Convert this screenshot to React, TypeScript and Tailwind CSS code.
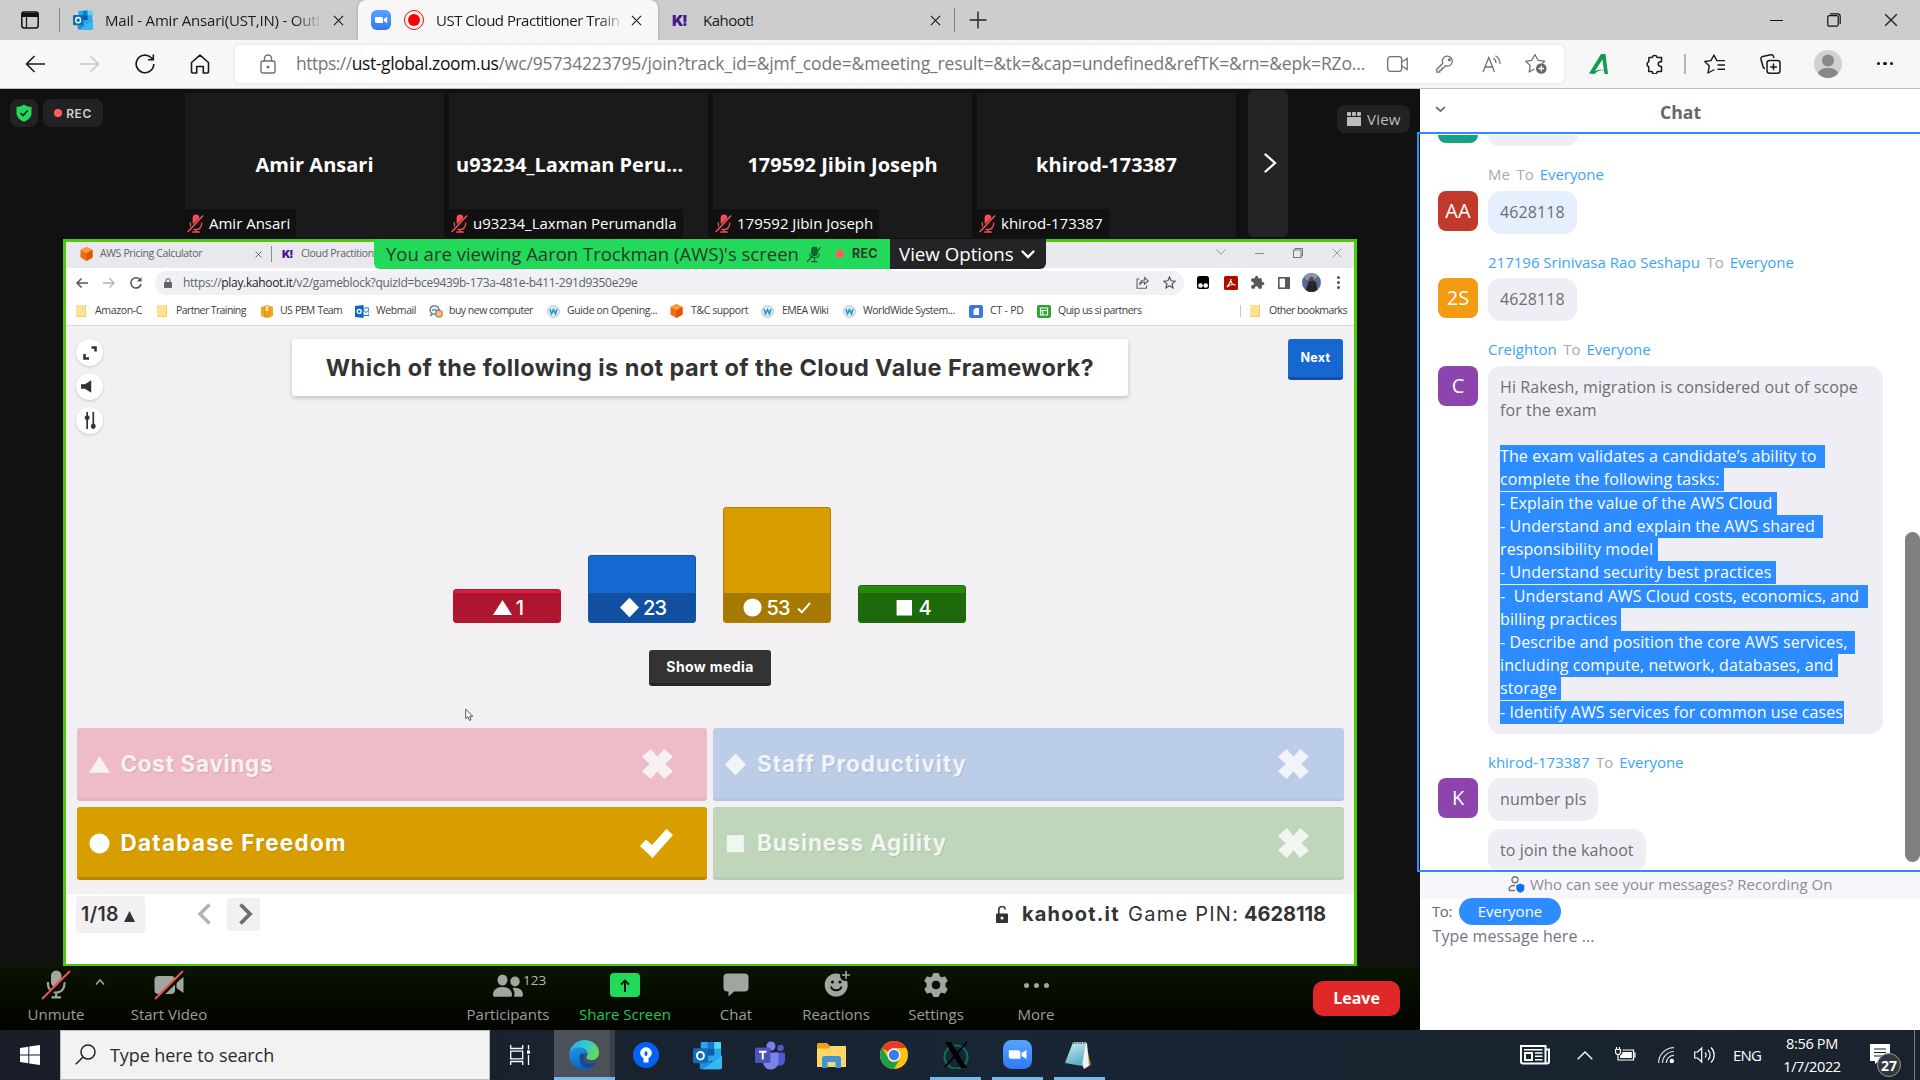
import React from 'react';

type P = { className?: string };

/* ---------- shared icons ---------- */

const Cross = ({ className = '' }: P) => (
  <svg viewBox="0 0 12 12" className={className} fill="none" stroke="currentColor" strokeWidth="1.2">
    <path d="M1 1l10 10M11 1L1 11" />
  </svg>
);

const ZoomLogo = ({ className = '' }: P) => (
  <svg viewBox="0 0 30 30" className={className}>
    <defs>
      <linearGradient id="zoomBlue" x1="0" y1="0" x2="0" y2="1">
        <stop offset="0" stopColor="#56a4ff" />
        <stop offset="1" stopColor="#3279f6" />
      </linearGradient>
    </defs>
    <rect width="30" height="30" rx="8.5" fill="url(#zoomBlue)" />
    <path d="M6 10.5h9.5a2.5 2.5 0 0 1 2.500 2.500v6.500H8.500A2.500 2.500 0 0 1 6 17z" fill="#fff" />
    <path d="M19.300 13.500l5-3.200v9.400l-5-3.200z" fill="#fff" />
  </svg>
);

const Outlook = ({ className = '' }: P) => (
  <svg viewBox="0 0 30 30" className={className}>
    <rect x="8" y="1" width="21" height="20" rx="1.500" fill="#28a8ea" />
    <path d="M8 8h7v7H8z" fill="#0364b8" />
    <path d="M15 1h7v7h-7z" fill="#0f78d4" />
    <path d="M22 1h5.500A1.500 1.500 0 0 1 29 2.500V8h-7z" fill="#50d9ff" />
    <path d="M15 8h7v7h-7z" fill="#0f5ba5" />
    <path d="M7 15l11.500 7L30 15v12.500a1.800 1.800 0 0 1-1.800 1.800H9A2 2 0 0 1 7 27.300z" fill="#1a93e0" />
    <path d="M30 15v12.500a1.800 1.800 0 0 1-1.800 1.800H10z" fill="#35b8f1" />
    <rect x="0" y="7.500" width="15.500" height="15.500" rx="1.500" fill="#0f6cbd" />
    <ellipse cx="7.700" cy="15.200" rx="3.600" ry="3.900" fill="none" stroke="#fff" strokeWidth="2" />
  </svg>
);

const MutedMic = ({ className = '' }: P) => (
  <svg viewBox="0 0 18 20" className={className}>
    <rect x="6" y="0.500" width="7" height="11.500" rx="3.500" fill="#f25056" />
    <path d="M3.500 9v1.500a6 6 0 0 0 12 0V9M9.500 16.500V19M5.500 19h8" stroke="#f25056" strokeWidth="1.500" fill="none" />
    <path d="M0.800 19.500L17.500 2.500" stroke="#111" strokeWidth="4" />
    <path d="M0.800 19L17 1.500" stroke="#f25056" strokeWidth="1.700" />
  </svg>
);

const Wiki = ({ className = '' }: P) => (
  <svg viewBox="0 0 14 14" className={className}>
    <circle cx="7" cy="7" r="6.400" fill="#dfe9ef" stroke="#a9bcc7" strokeWidth="0.800" />
    <path d="M3.200 4.300l1.700 5.200L7 4.800l2.100 4.700 1.700-5.200" stroke="#1d98cf" strokeWidth="1.600" fill="none" />
  </svg>
);

const Cube = ({ className = '' }: P) => (
  <svg viewBox="0 0 13 14" className={className}>
    <path d="M6.500 0l6 3v7.500l-6 3.500-6-3.500V3z" fill="#ef6c14" />
    <path d="M6.500 0l6 3-6 3.200-6-3.200z" fill="#fb9a3d" />
    <path d="M6.500 6.200V14l6-3.500V3z" fill="#dd5608" />
  </svg>
);

const Folder = () => <span className="h-[12px] w-[10px] shrink-0 rounded-[1px] border-r border-b border-[#f1cf6a] bg-[#fde293]" />;

const KLogo = ({ className = '' }: P) => (
  <span className={`shrink-0 font-['Inter'] leading-none font-black text-[#46178f] ${className}`}>K!</span>
);

/* ---------- outer browser ---------- */

function TabStrip() {
  return (
    <div className="flex h-10 items-stretch bg-[#cdcdcd] text-[15px] text-[#1b1b1b]">
      <div className="flex w-[60px] items-center justify-between pl-[21px]">
        <svg viewBox="0 0 18 18" className="size-[18px]" fill="none" stroke="#111" strokeWidth="1.500">
          <rect x="0.800" y="1" width="16.400" height="16" rx="2.500" />
          <path d="M1 4h16" strokeWidth="4" />
          <path d="M5.500 5v12" strokeWidth="1.200" />
        </svg>
        <span className="h-6 w-px bg-[#8a8a8a]" />
      </div>
      <div className="flex w-[298px] items-center pl-[13px]">
        <Outlook className="size-5 shrink-0" />
        <span className="ml-3 w-[215px] shrink-0 overflow-hidden tracking-[-0.2px] whitespace-nowrap [mask-image:linear-gradient(to_right,#000_88%,transparent_101%)]">
          Mail - Amir Ansari(UST,IN) - Outl
        </span>
        <Cross className="ml-[13px] size-[11px]" />
      </div>
      <div className="flex w-[300px] items-center rounded-t-lg bg-[#f7f7f7] pl-[13px] shadow-[0_0_3px_rgba(0,0,0,0.3)]">
        <ZoomLogo className="size-5 shrink-0" />
        <span className="ml-[13px] flex size-[20px] shrink-0 items-center justify-center rounded-full border-[1.5px] border-[#f00]">
          <span className="size-3 rounded-full bg-[#f00]" />
        </span>
        <span className="ml-3 w-[184px] shrink-0 overflow-hidden tracking-[-0.49px] whitespace-nowrap [mask-image:linear-gradient(to_right,#000_88%,transparent_103%)]">
          UST Cloud Practitioner Train
        </span>
        <Cross className="ml-[11px] size-[11px]" />
      </div>
      <div className="flex w-[298px] items-center pl-[14px]">
        <KLogo className="w-[16px] text-[15px] tracking-[-1.5px]" />
        <span className="ml-[15px] w-[227px] shrink-0 tracking-[-0.5px]">Kahoot!</span>
        <Cross className="size-[11px]" />
        <span className="ml-[13px] h-6 w-px bg-[#7a7a7a]" />
      </div>
      <div className="flex flex-1 items-center pl-[13px]">
        <svg viewBox="0 0 18 18" className="size-[18px]" stroke="#222" strokeWidth="1.400">
          <path d="M9 0.500v17M0.500 9h17" />
        </svg>
      </div>
      <div className="flex w-[150px] items-center text-[#222]">
        <span className="h-px w-[13px] bg-[#111]" />
        <svg viewBox="0 0 14 14" className="ml-[44px] size-[14px]" fill="none" stroke="#111" strokeWidth="1.200">
          <rect x="0.800" y="2.600" width="10.400" height="10.600" rx="1.500" />
          <path d="M3 0.800h7.500a2.700 2.700 0 0 1 2.700 2.700V11" />
        </svg>
        <Cross className="ml-[43px] size-[14px]" />
      </div>
    </div>
  );
}

function AddressRow() {
  return (
    <div className="flex h-[49px] items-center border-b border-[#bdbdbd] bg-[#f7f7f7] pb-px">
      <svg viewBox="0 0 20 18" className="ml-[25px] h-[18px] w-5" fill="none" stroke="#1a1a1a" strokeWidth="1.600">
        <path d="M20 9H1.500M9.500 1L1.500 9l8 8" />
      </svg>
      <svg viewBox="0 0 20 18" className="ml-[35px] h-[18px] w-5" fill="none" stroke="#c9c9c9" strokeWidth="1.500">
        <path d="M0 9h18.500M10.500 1l8 8-8 8" />
      </svg>
      <svg viewBox="0 0 20 20" className="ml-[35px] size-5" fill="none" stroke="#1a1a1a" strokeWidth="1.600">
        <path d="M18.800 10A8.800 8.800 0 1 1 16 3.500L18 5.500M18.300 0.500v5.200h-5.200" />
      </svg>
      <svg viewBox="0 0 20 20" className="ml-[35px] size-5" fill="none" stroke="#1a1a1a" strokeWidth="1.600" strokeLinejoin="round">
        <path d="M1.500 8.500L10 1.200l8.500 7.300V18a1 1 0 0 1-1 1h-4.200v-6.500H6.700V19H2.500a1 1 0 0 1-1-1z" />
      </svg>
      <div className="ml-[25px] flex h-[38px] w-[1329px] items-center rounded-[5px] bg-white shadow-[0_0_3px_rgba(0,0,0,0.12)]">
        <svg viewBox="0 0 16 20" className="ml-[25px] h-5 w-4" fill="none" stroke="#707070" strokeWidth="1.400">
          <rect x="1" y="7" width="14" height="12" rx="2" />
          <path d="M4.500 7V4.500a3.500 3.500 0 0 1 7 0V7" />
          <circle cx="8" cy="13" r="0.800" fill="#707070" />
        </svg>
        <span className="mb-px ml-[20px] w-[1091px] shrink-0 text-[17.5px] whitespace-nowrap text-[#767676]">
          <span className="tracking-[-0.5px]">https://</span>
          <span className="tracking-[-0.4px] text-[#111]">ust-global.zoom.us</span>
          <span className="tracking-[-0.14px]">
            /wc/95734223795/join?track_id=&amp;jmf_code=&amp;meeting_result=&amp;tk=&amp;cap=undefined&amp;refTK=&amp;rn=&amp;epk=RZo...
          </span>
        </span>
        <svg viewBox="0 0 21 16" className="h-4 w-[21px] shrink-0" fill="none" stroke="#707070" strokeWidth="1.300">
          <rect x="0.700" y="0.700" width="14" height="14.600" rx="2.500" />
          <path d="M14.700 6l5.500-3.500v11L14.700 10" />
        </svg>
        <svg viewBox="0 0 18 18" className="ml-7 size-[18px] shrink-0" fill="none" stroke="#707070" strokeWidth="1.300" strokeLinejoin="round">
          <path d="M9.300 10.700a5 5 0 1 0-2.500-2.400L0.800 14.300V17.200h3v-2h2v-2h1.600z" />
          <circle cx="13.300" cy="4.700" r="0.900" fill="#707070" />
        </svg>
        <svg viewBox="0 0 20 18" className="ml-7 h-[18px] w-5 shrink-0" fill="none" stroke="#707070" strokeWidth="1.300">
          <path d="M1 17L6.800 2.500 12.500 17M2.800 12h8M11.500 3a6 6 0 0 1 2.500 5M13.500 0.800A9.500 9.500 0 0 1 18 9" />
        </svg>
        <svg viewBox="0 0 22 21" className="ml-[23px] h-[21px] w-[22px] shrink-0" fill="none" stroke="#707070" strokeWidth="1.300" strokeLinejoin="round">
          <path d="M9.500 16l-5.300 3 1-6.400L0.800 8.200l6.100-.9L10 1.500l3 5.800 6.500.9-2 2" />
          <circle cx="16.300" cy="15.500" r="5.300" fill="#666" stroke="none" />
          <path d="M16.300 12.800v5.400M13.600 15.500H19" stroke="#fff" />
        </svg>
      </div>
      <svg viewBox="0 0 20 20" className="ml-[25px] size-5">
        <path d="M0 19.500L12 0h4.500L19 20h-3.500L13.400 5.500 6 17c3.500-1.500 6-1.500 9-1-4 0-7 1.500-9.500 4z" fill="#0f9d4f" />
      </svg>
      <svg viewBox="0 0 19 20" className="ml-9 h-5 w-[19px]" fill="none" stroke="#1a1a1a" strokeWidth="1.500" strokeLinejoin="round">
        <path d="M4 3.500h3.200a2.600 2.600 0 0 1 5 0H16.500v4.300h-1a2.300 2.300 0 0 0 0 4.600h1v5.100H12.200a2.500 2.500 0 0 1-5 0H3.700v-4.800a2.700 2.700 0 0 1 0-5z" />
      </svg>
      <span className="ml-[20px] h-5 w-[1.500px] bg-[#b5b5b5]" />
      <svg viewBox="0 0 22 20" className="ml-[18px] h-5 w-[22px]" fill="none" stroke="#1a1a1a" strokeWidth="1.400" strokeLinejoin="round">
        <path d="M10.500 15.500L4 19l1.300-7L0.800 7.500l6.100-.9L10 1l2.800 5.600H21M13.500 11H21M13.500 15.300H21" />
      </svg>
      <svg viewBox="0 0 21 20" className="ml-[34px] h-5 w-[21px]" fill="none" stroke="#1a1a1a" strokeWidth="1.500">
        <rect x="7" y="6.500" width="13" height="12.700" rx="2.500" />
        <path d="M13.500 9.500v6.700M10.200 12.900h6.700M5 14.500A2.500 2.500 0 0 1 3 12.500L1 5.500a2.500 2.500 0 0 1 1.800-3L10.500.8a2.500 2.500 0 0 1 3 1.700l.5 1.500" />
      </svg>
      <svg viewBox="0 0 28 28" className="ml-[33px] size-7">
        <circle cx="14" cy="14" r="14" fill="#d2d0ce" />
        <circle cx="14" cy="10.500" r="6" fill="#8a8886" />
        <path d="M4 23.500c1-4 5-5.500 10-5.500s9 1.500 10 5.500A14 14 0 0 1 14 28a14 14 0 0 1-10-4.500z" fill="#8a8886" />
      </svg>
      <span className="ml-[35px] flex gap-[3px]">
        {[0, 1, 2].map((i) => (
          <span key={i} className="size-[3.500px] rounded-full bg-[#111]" />
        ))}
      </span>
    </div>
  );
}

/* ---------- meeting area ---------- */

const people = [
  { title: 'Amir Ansari', label: 'Amir Ansari', w: 'w-[111px]', pad: 'justify-center' },
  { title: 'u93234_Laxman Peru...', label: 'u93234_Laxman Perumandla', w: 'w-[234px]', pad: 'pl-[7px]' },
  { title: '179592 Jibin Joseph', label: '179592 Jibin Joseph', w: 'w-[166px]', pad: 'justify-center' },
  { title: 'khirod-173387', label: 'khirod-173387', w: 'w-[132px]', pad: 'justify-center' },
];

function Gallery() {
  return (
    <div className="flex h-[150px] items-start bg-[#111]">
      <div className="flex w-[185px] gap-[5px] pt-[10px] pl-[10px]">
        <div className="flex size-7 items-center justify-center rounded-lg bg-[#222]">
          <svg viewBox="0 0 16 18" className="h-[18px] w-4">
            <path d="M8 0.500C10 2 12.500 2.800 15.500 2.800V9c0 4-3 7-7.500 8.700C3.500 16 0.500 13 0.500 9V2.800C3.500 2.800 6 2 8 0.500z" fill="#23d959" />
            <path d="M4.500 9l2.500 2.500 4.700-5" stroke="#1a1a1a" strokeWidth="1.700" fill="none" />
          </svg>
        </div>
        <div className="flex h-7 w-[60px] items-center justify-center gap-[4px] rounded-lg bg-[#222]">
          <span className="size-2 rounded-full bg-[#ff5f5f]" />
          <span className="mt-px font-['Inter'] text-[12px] font-semibold tracking-[0.5px] text-[#cfcfcf]">REC</span>
        </div>
      </div>
      <div className="flex gap-[5px] pt-1">
        {people.map((p) => (
          <div key={p.title} className={`relative flex h-[145px] w-[259px] items-center bg-[#1a1a1a] pb-[2px] ${p.pad}`}>
            <span className="text-[20px] font-bold whitespace-nowrap text-white">{p.title}</span>
            <div className={`absolute bottom-0 left-0 flex h-[29px] items-center bg-[#111] ${p.w}`}>
              <MutedMic className="ml-[2px] h-[19px] w-[17px] shrink-0" />
              <span className="ml-[5px] text-[15px] whitespace-nowrap text-white">{p.label}</span>
            </div>
          </div>
        ))}
      </div>
      <div className="mt-px ml-3 flex h-[147px] w-10 items-center justify-center rounded-md bg-[#242424]">
        <svg viewBox="0 0 13 20" className="mb-[2px] ml-1 h-5 w-[13px]" fill="none" stroke="#fff" strokeWidth="2.300" strokeLinecap="round">
          <path d="M1.500 1.500L11 10l-9.500 8.500" />
        </svg>
      </div>
      <div className="mt-4 ml-[49px] flex h-7 w-[73px] items-center rounded-lg bg-[#222] text-[#bdbdbd]">
        <svg viewBox="0 0 14 14" className="ml-[10px] size-[14px]" fill="#bdbdbd">
          <rect x="0" y="0" width="4" height="4" rx="1" />
          <rect x="5" y="0" width="4" height="4" rx="1" />
          <rect x="10" y="0" width="4" height="4" rx="1" />
          <rect x="0" y="5" width="14" height="9" rx="0.500" />
        </svg>
        <span className="ml-[6px] text-[15px] tracking-[0.2px]">View</span>
      </div>
    </div>
  );
}

function SharedTabs() {
  return (
    <div className="flex h-[26px] items-center bg-[#e8e8ed] pb-[2px] text-[10.5px] text-[#5f6368]">
      <Cube className="ml-[14px] h-[14px] w-[13px]" />
      <span className="ml-[7px] w-[155px] tracking-[-0.36px]">AWS Pricing Calculator</span>
      <Cross className="size-[7px] text-[#333]" />
      <span className="ml-[9px] h-4 w-px bg-[#8d8d90]" />
      <KLogo className="ml-[10px] w-3 text-[11px] tracking-[-1px]" />
      <span className="ml-[7px] tracking-[-0.33px]">Cloud Practition</span>
      <div className="ml-auto flex items-center pr-[12px] text-[#9a9a9e]">
        <svg viewBox="0 0 10 6" className="mb-[4px] h-[6px] w-[10px]" fill="none" stroke="currentColor"><path d="M0.500 0.500L5 5.200 9.500 0.500" /></svg>
        <span className="mb-[2px] ml-[29px] h-px w-[9px] bg-[#8a8a8e]" />
        <svg viewBox="0 0 10 10" className="mb-[3px] ml-[29px] size-[10px]" fill="none" stroke="#77777b"><rect x="0.500" y="2" width="7.500" height="7.500" /><path d="M2 2V.5h7.500V8H8" /></svg>
        <Cross className="mb-[3px] ml-[29px] size-[10px]" />
      </div>
    </div>
  );
}

function SharedAddress() {
  return (
    <div className="flex h-[29px] items-center bg-white text-[#5f6368]">
      <svg viewBox="0 0 12 10" className="ml-[10px] h-[10px] w-3" fill="none" stroke="#505357" strokeWidth="1.500"><path d="M12 5H1.200M5.500 0.500L1 5l4.500 4.500" /></svg>
      <svg viewBox="0 0 12 10" className="ml-[15px] h-[10px] w-3" fill="none" stroke="#b3b5b8" strokeWidth="1.400"><path d="M0 5h10.800M6.500 0.500L11 5 6.500 9.500" /></svg>
      <svg viewBox="0 0 12 12" className="ml-[15px] size-3" fill="none" stroke="#505357" strokeWidth="1.500"><path d="M11 7A5.100 5.100 0 1 1 9.800 2.500L11 3.800" /><path d="M11.500 0v4.500H7z" fill="#505357" stroke="none" /></svg>
      <div className="ml-[13px] flex h-6 w-[1029px] items-center rounded-full bg-[#f0f1f5]">
        <svg viewBox="0 0 8 10" className="ml-[9px] h-[10px] w-2" fill="#5f6368"><rect y="4" width="8" height="6" rx="0.800" /><path d="M2 4V2.700a2 2 0 0 1 4 0V4" fill="none" stroke="#5f6368" strokeWidth="1.100" /></svg>
        <span className="mt-px ml-[11px] text-[12px] tracking-[-0.325px] whitespace-nowrap">
          https://<span className="text-[#202124]">play.kahoot.it</span>/v2/gameblock?quizId=bce9439b-173a-481e-b411-291d9350e29e
        </span>
        <svg viewBox="0 0 13 13" className="ml-auto size-[13px]" fill="none" stroke="#5f6368" strokeWidth="1.100"><path d="M3.500 3H1v9.300h9.500V9.500M3.500 9c.5-3.500 2.500-5 5-5V1.500L12.300 5 8.500 8V6c-2.500 0-4 1-5 3z" /></svg>
        <svg viewBox="0 0 13 13" className="mr-[8px] ml-[14px] size-[13px]" fill="none" stroke="#505357" strokeWidth="1.200"><path d="M6.500 1l1.600 3.800 4.100.4-3.100 2.700.9 4-3.500-2.100L3 11.900l.9-4L.8 5.200l4.100-.4z" /></svg>
      </div>
      <svg viewBox="0 0 12 13" className="ml-[13px] h-[13px] w-3"><rect width="12" height="13" rx="2.500" fill="#000" /><circle cx="3.500" cy="9.500" r="2.300" fill="#fff" /><circle cx="8.700" cy="9.500" r="2.300" fill="#fff" /></svg>
      <svg viewBox="0 0 14 14" className="ml-[15px] size-[14px]"><rect width="14" height="14" rx="1.500" fill="#b30b00" /><path d="M3 11c1-2 4-4 4-8M7 5c.5 2.500 2 4 4.500 4C8.500 8 5 9 3 11" fill="none" stroke="#fff" strokeWidth="1.200" /></svg>
      <svg viewBox="0 0 24 24" className="ml-[12px] size-[15px]" fill="#55585c"><path d="M20.500 11H19V7a2 2 0 0 0-2-2h-4V3.500a2.500 2.500 0 0 0-5 0V5H4a2 2 0 0 0-2 2v3.800h1.500a2.700 2.700 0 0 1 0 5.400H2V20a2 2 0 0 0 2 2h3.800v-1.500a2.700 2.700 0 0 1 5.400 0V22H17a2 2 0 0 0 2-2v-4h1.500a2.500 2.500 0 0 0 0-5z" /></svg>
      <svg viewBox="0 0 12 12" className="ml-[13px] size-3"><rect x="0.800" y="0.800" width="10.400" height="10.400" fill="none" stroke="#55585c" strokeWidth="1.600" /><path d="M7 0h5v12H7z" fill="#55585c" /></svg>
      <svg viewBox="0 0 20 20" className="ml-[12px] size-[19px]"><circle cx="10" cy="10" r="10" fill="#566a92" /><path d="M2 4a10 10 0 0 1 8-4c3 0 5 1 7 3l-5 5-3-3-4 3z" fill="#8a96b0" /><path d="M4 18l3-9 4-2 4 3 1 8a10 10 0 0 1-12 0z" fill="#26262e" /><circle cx="10" cy="6.500" r="2.500" fill="#5c4a43" /></svg>
      <span className="ml-[16px] flex flex-col gap-[2.500px]">
        {[0, 1, 2].map((i) => (
          <span key={i} className="size-[2.500px] rounded-full bg-[#505357]" />
        ))}
      </span>
    </div>
  );
}

function Bookmarks() {
  return (
    <div className="flex h-[29px] items-center border-b border-[#d9d9dd] bg-white text-[10.5px] whitespace-nowrap text-[#3c4043]">
      <span className="flex w-[81px] items-center pl-[10px] tracking-[-0.35px]"><Folder /><span className="ml-[9px]">Amazon-C</span></span>
      <span className="ml-[10px] flex w-[104px] items-center tracking-[-0.6px]"><Folder /><span className="ml-[9px]">Partner Training</span></span>
      <span className="flex w-[94px] items-center tracking-[-0.7px]">
        <svg viewBox="0 0 12 13" className="h-[13px] w-3 shrink-0"><path d="M0 2l6-2 6 2v9l-6 2-6-2z" fill="#f4a61d" /><path d="M4 1v11.500M8 1v11.500" stroke="#d98708" /><path d="M4.500 1h3v5h-3z" fill="#ffe0a0" /></svg>
        <span className="ml-[7px] [word-spacing:1px]">US PEM Team</span>
      </span>
      <span className="flex w-[74px] items-center tracking-[-0.4px]">
        <svg viewBox="0 0 14 13" className="h-[13px] w-[14px] shrink-0"><path d="M7 3h7v7.500H7z" fill="#fff" stroke="#1272c9" /><path d="M8 5l3 2.500L14 5" fill="none" stroke="#1272c9" /><path d="M0 1l8.500-1v13L0 12z" fill="#0f66bd" /><circle cx="4.200" cy="6.500" r="2" fill="none" stroke="#fff" strokeWidth="1.300" /></svg>
        <span className="ml-[7px]">Webmail</span>
      </span>
      <span className="flex w-[118px] items-center tracking-[-0.5px]">
        <svg viewBox="0 0 14 13" className="h-[13px] w-[14px] shrink-0"><ellipse cx="5.500" cy="5" rx="4.500" ry="4.300" fill="#e8eef4" stroke="#4a5560" strokeWidth="1.100" /><path d="M3 5h5" stroke="#3d8ad6" strokeWidth="1.300" /><rect x="7" y="5.500" width="6" height="6.500" rx="1.500" fill="#f6c27a" stroke="#8a6a3c" /><path d="M2 9l-1.500 2.500L4 10" fill="#4a5560" /></svg>
        <span className="ml-[6px]">buy new computer</span>
      </span>
      <span className="flex w-[123px] items-center tracking-[-0.37px]"><Wiki className="size-[13px] shrink-0" /><span className="ml-[7px]">Guide on Opening...</span></span>
      <span className="flex w-[91px] items-center tracking-[-0.4px]"><Cube className="h-[14px] w-[13px] shrink-0" /><span className="ml-[8px]">T&amp;C support</span></span>
      <span className="flex w-[82px] items-center tracking-[-0.5px]"><Wiki className="size-[13px] shrink-0" /><span className="ml-[8px]">EMEA Wiki</span></span>
      <span className="flex w-[126px] items-center tracking-[-0.46px]"><Wiki className="size-[13px] shrink-0" /><span className="ml-[7px]">WorldWide System...</span></span>
      <span className="flex w-[68px] items-center tracking-[-0.2px]">
        <svg viewBox="0 0 14 13" className="h-[13px] w-[14px] shrink-0"><rect width="14" height="13" rx="2" fill="#3a77e8" /><path d="M6.500 3H10v7H4.500V5z" fill="#fff" /></svg>
        <span className="ml-[7px]">CT - PD</span>
      </span>
      <span className="flex items-center tracking-[-0.5px]">
        <svg viewBox="0 0 14 13" className="h-[13px] w-[14px] shrink-0"><rect width="14" height="13" rx="2" fill="#2ba52e" /><path d="M3.500 3h7v7h-7zM3.500 5.500h7M5.700 5.500V10" fill="none" stroke="#fff" strokeWidth="1.200" /></svg>
        <span className="ml-[7px]">Quip us si partners</span>
      </span>
      <span className="mr-[7px] ml-auto flex items-center tracking-[-0.55px]">
        <span className="mr-[9px] h-3 w-px bg-[#c8c8cc]" /><Folder /><span className="ml-[9px]">Other bookmarks</span>
      </span>
    </div>
  );
}

const RoundButton = ({ children }: { children: React.ReactNode }) => (
  <div className="flex size-[27px] items-center justify-center rounded-full bg-white shadow-[0_1px_3px_rgba(0,0,0,0.18)]">{children}</div>
);

const bars = [
  { n: '1', h: 'h-[34px]', c: 'bg-[#d61f3f] border-[#bb1237]', f: 'bg-[#ae152e]', shape: 'tri' },
  { n: '23', h: 'h-[68px]', c: 'bg-[#1568cf] border-[#1256ab]', f: 'bg-[#1150a0]', shape: 'dia' },
  { n: '53', h: 'h-[116px]', c: 'bg-[#d89e00] border-[#b27f04]', f: 'bg-[#a67a02]', shape: 'cir' },
  { n: '4', h: 'h-[38px]', c: 'bg-[#26890c] border-[#1c6a09]', f: 'bg-[#1e690b]', shape: 'sq' },
];

const Shape = ({ kind, className }: { kind: string; className: string }) => (
  <svg viewBox="0 0 24 24" className={className} fill="currentColor">
    {kind === 'tri' && <path d="M12 2.500L24 21.500H0z" />}
    {kind === 'dia' && <path d="M12 -0.500L24 12 12 24.500 0 12z" />}
    {kind === 'cir' && <circle cx="12" cy="12" r="11.500" />}
    {kind === 'sq' && <path d="M2 2.500h19.500v19.500H2z" />}
  </svg>
);

const BigX = ({ className = '' }: P) => (
  <svg viewBox="0 0 32 31" className={className} fill="currentColor">
    <path d="M9 0L16 8l7-8 9 8-8 7.500 8 7.500-9 8-7-8-7 8-9-8 8-7.500L0 8z" />
  </svg>
);

const answers = [
  { t: 'Cost Savings', s: 'tri', c: 'bg-[#edbcc6] border-[#e5b3be] text-[#f8f1f4]', k: 'tracking-[0.7px]', ok: false },
  { t: 'Staff Productivity', s: 'dia', c: 'bg-[#bccde7] border-[#b3c5e1] text-[#f1f4fa]', k: 'tracking-[0.93px]', ok: false },
  { t: 'Database Freedom', s: 'cir', c: 'bg-[#d89e00] border-[#b58404] text-white', k: 'tracking-[1.25px]', ok: true },
  { t: 'Business Agility', s: 'sq', c: 'bg-[#c0d6bb] border-[#b8cbb6] text-[#f2f6f2]', k: 'tracking-[0.83px]', ok: false },
];

function Kahoot() {
  return (
    <div className="flex flex-1 flex-col bg-white font-['Inter']">
      <div className="flex h-[568px] flex-col bg-[#f2f0f3]">
        <div className="flex h-[181px] items-start">
          <div className="ml-[10px] flex w-[216px] flex-col gap-[7px] pt-[13px]">
            <RoundButton>
              <svg viewBox="0 0 14 14" className="size-[14px]" fill="none" stroke="#333" strokeWidth="2.600"><path d="M8.500 1.500h4v4M1.500 8v4.500H6" /></svg>
            </RoundButton>
            <RoundButton>
              <svg viewBox="0 0 14 16" className="mr-[7px] h-[15px] w-[11px]" fill="#333"><path d="M0 5h5l8-5v16l-8-5H0z" /></svg>
            </RoundButton>
            <RoundButton>
              <svg viewBox="0 0 12 18" className="h-[17px] w-3" fill="#333" stroke="#333" strokeWidth="1.800"><path d="M3 0v18M9.500 0v18" /><circle cx="3" cy="6" r="1.700" /><circle cx="9.500" cy="15" r="1.700" /></svg>
            </RoundButton>
          </div>
          <div className="mt-[13px] flex h-[57px] w-[836px] items-center justify-center rounded-[3px] bg-white shadow-[0_2px_4px_rgba(0,0,0,0.2)]">
            <span className="mt-px text-[23.500px] font-bold tracking-[0.41px] whitespace-nowrap text-[#333]">
              Which of the following is not part of the Cloud Value Framework?
            </span>
          </div>
          <div className="mt-[13px] ml-40 flex h-[41px] w-[55px] justify-center rounded-[3px] border-b-[3px] border-[#1052a8] bg-[#1568cf] pt-[10px] text-[12.500px] font-bold tracking-[0.3px] text-white">
            Next
          </div>
        </div>
        <div className="flex h-[116px] items-end justify-center gap-[27px] pr-px">
          {bars.map((b) => (
            <div key={b.n} className={`flex w-[108px] flex-col justify-end overflow-hidden rounded-[3px] border ${b.h} ${b.c}`}>
              <div className={`flex h-[29px] shrink-0 items-center justify-center gap-[4px] pl-[2px] text-[20px] font-medium tracking-[-0.9px] text-white ${b.f}`}>
                <Shape kind={b.shape} className="size-[19px]" />
                <span>{b.n}</span>
                {b.shape === 'cir' && (
                  <svg viewBox="0 0 14 12" className="mr-[2px] ml-[3px] h-3 w-[14px]" fill="none" stroke="#fff" strokeWidth="1.900"><path d="M1 6.500L4.800 10.300 13 1" /></svg>
                )}
              </div>
            </div>
          ))}
        </div>
        <div className="mt-[27px] ml-[583px] flex h-9 w-[122px] justify-center rounded-[3px] border-b-[3px] border-[#262626] bg-[#333] pt-[6px] text-[14px] font-bold tracking-[0.4px] text-white">
          Show media
        </div>
        <div className="ml-[399px] h-[42px] pt-[22px]">
          <svg viewBox="0 0 10 15" className="h-[14px] w-[9px]" fill="#fff" stroke="#4a3f3f" strokeWidth="1"><path d="M0.800 1v10.500l2.500-2 1.700 4 1.700-.7L5.200 9h3.500z" /></svg>
        </div>
        <div className="grid grid-cols-[630.5px_630.5px] gap-x-[6px] gap-y-[6px] pl-[10.5px]">
          {answers.map((a) => (
            <div key={a.t} className={`flex h-[73px] items-center rounded-[3px] border-b-[3px] pt-[2px] pl-3 ${a.c}`}>
              <Shape kind={a.s} className="size-[21px]" />
              <span className={`ml-[11px] text-[22.500px] font-bold [text-shadow:1px_1px_1px_rgba(0,0,0,0.12)] ${a.k}`}>{a.t}</span>
              {a.ok ? (
                <svg viewBox="0 0 33 29" className="mr-[34px] ml-auto h-[29px] w-[33px]" fill="currentColor"><path d="M0 17l6-6.500 6 5.500L26.500 0 33 6 12.500 29z" /></svg>
              ) : (
                <BigX className="mr-[34.5px] ml-auto h-[30px] w-[31px]" />
              )}
            </div>
          ))}
        </div>
      </div>
      <div className="flex h-[40px] items-center text-[#333]">
        <div className="mt-px ml-[10px] flex h-[37px] w-[69px] items-center rounded-[3px] bg-[#f2f0f3] pl-[5px] text-[19.500px] font-semibold tracking-[0.4px]">
          1/18
          <svg viewBox="0 0 11 11" className="mt-[3px] ml-[5px] size-[11px]" fill="#333"><path d="M5.500 0L11 11H0z" /></svg>
        </div>
        <svg viewBox="0 0 14 22" className="ml-[52px] h-[22px] w-[14px]" fill="none" stroke="#b2b2b2" strokeWidth="3.400"><path d="M12.500 1.500L3 11l9.500 9.500" /></svg>
        <div className="ml-4 flex h-[33px] w-[33px] items-center justify-center rounded-[3px] bg-[#f2f0f3]">
          <svg viewBox="0 0 14 22" className="ml-1 h-[22px] w-[14px]" fill="none" stroke="#6e6e6e" strokeWidth="3.800"><path d="M1.500 1.500L11 11l-9.500 9.500" /></svg>
        </div>
        <div className="mr-[28px] ml-auto flex items-center text-[20px]">
          <svg viewBox="0 0 12 17" className="h-[17px] w-3" fill="#333"><path fillRule="evenodd" d="M0 8.500a1 1 0 0 1 1-1h10a1 1 0 0 1 1 1V16a1 1 0 0 1-1 1H1a1 1 0 0 1-1-1zM6 10.500a1.500 1.500 0 1 0 0 3 1.500 1.500 0 0 0 0-3z" /><path d="M2.800 8V4a3.200 3.200 0 0 1 6.400-.5" fill="none" stroke="#333" strokeWidth="1.600" /></svg>
          <span className="ml-[14px] w-[106px] font-bold tracking-[1.200px]">kahoot.it</span>
          <span className="w-[116px] tracking-[1.250px]">Game PIN:</span>
          <span className="w-[82px] font-bold tracking-[-0.050px]">4628118</span>
        </div>
      </div>
    </div>
  );
}

function ShareFrame() {
  return (
    <div className="relative ml-[63px] flex h-[727px] w-[1294px] flex-col border-[3px] border-b-2 border-[#4ec80a] bg-white">
      <SharedTabs />
      <SharedAddress />
      <Bookmarks />
      <Kahoot />
      <div className="absolute -top-[3px] left-[308px] flex h-[30px] whitespace-nowrap">
        <div className="flex w-[516px] items-center rounded-bl-md bg-[#23d959] pl-[12px] text-[#2a3a2e]">
          <span className="w-[420px] text-[18.500px]">You are viewing Aaron Trockman (AWS)'s screen</span>
          <svg viewBox="0 0 16 18" className="h-[17px] w-4" fill="none" stroke="#17602f">
            <rect x="5.500" y="1" width="6" height="9.500" rx="3" fill="#17602f" />
            <path d="M3.500 8c0 6 10 6 10 0M8.500 13v3.500M5 16.500h7" strokeWidth="1.200" />
            <path d="M0.500 17L15 1.500" strokeWidth="1.400" />
          </svg>
          <span className="ml-[14px] size-2 rounded-full bg-[#ff5a5f]" />
          <span className="mt-px ml-2 font-['Inter'] text-[12.500px] font-bold tracking-[0.200px]">REC</span>
        </div>
        <div className="flex w-[156px] items-center rounded-br-md bg-[#242427] pl-[9px] text-[18.700px] text-white">
          View Options
          <svg viewBox="0 0 14 9" className="ml-[7px] h-[9px] w-[14px]" fill="none" stroke="#fff" strokeWidth="2.300" strokeLinecap="round"><path d="M1.500 1.500L7 7l5.500-5.500" /></svg>
        </div>
      </div>
    </div>
  );
}

function Tool({ label, width, green, children }: { label: string; width: string; green?: boolean; children: React.ReactNode }) {
  return (
    <div className={`flex flex-col items-center ${width}`}>
      <div className="flex h-[38px] items-center justify-center">{children}</div>
      <span className={`text-[15px] leading-5 whitespace-nowrap ${green ? 'text-[#23c552]' : 'text-[#9b9d98]'}`}>{label}</span>
    </div>
  );
}

function MeetingToolbar() {
  return (
    <div className="flex h-16 items-start bg-linear-to-b from-[#0a1500] to-[#020400]">
      <div className="relative ml-[6px]">
        <Tool label="Unmute" width="w-[100px]">
          <svg viewBox="0 0 30 30" className="h-[30px] w-[30px]">
            <rect x="10" y="0.500" width="10.500" height="17" rx="5.200" fill="#a3a5a0" />
            <path d="M7 12v2.500a8.200 8.200 0 0 0 16.400 0V12M15.200 23v4M10.500 27.300h9.500" stroke="#a3a5a0" strokeWidth="2.200" fill="none" />
            <path d="M2 29.500L31 1.500" stroke="#071000" strokeWidth="4.500" />
            <path d="M1 29L29 1" stroke="#f2554f" strokeWidth="2" />
          </svg>
        </Tool>
        <svg viewBox="0 0 10 6" className="absolute top-[13px] left-[89px] h-[6px] w-[10px]" fill="none" stroke="#a3a5a0" strokeWidth="1.600"><path d="M1 5.500L5 1l4 4.500" /></svg>
      </div>
      <Tool label="Start Video" width="ml-[13px] w-[100px]">
        <svg viewBox="0 0 30 30" className="h-[30px] w-[30px]">
          <rect x="0.500" y="6" width="20.500" height="18" rx="4" fill="#a3a5a0" />
          <path d="M22.500 12l7-5v16l-7-5z" fill="#a3a5a0" />
          <path d="M2 30L31 1.500" stroke="#071000" strokeWidth="4.500" />
          <path d="M1 29L29 1" stroke="#f2554f" strokeWidth="2" />
        </svg>
      </Tool>
      <div className="relative ml-[239px]">
        <Tool label="Participants" width="w-[100px]">
          <svg viewBox="0 0 30 23" className="h-[23px] w-[30px]" fill="#a3a5a0">
            <ellipse cx="9.500" cy="6" rx="5" ry="5.500" />
            <path d="M0 21c0-5 3.500-8 9.500-8s9.500 3 9.500 8c0 1-.5 1.800-2 1.800H2c-1.500 0-2-.8-2-1.800z" />
            <ellipse cx="22" cy="7.500" rx="4.700" ry="5" />
            <path d="M19.500 14c7-1 10.500 2.500 10.500 7 0 1-.5 1.800-2 1.800h-7c1-2.500.5-6-1.500-8.800z" />
          </svg>
        </Tool>
        <span className="absolute top-[4px] left-[65px] text-[13.500px] leading-5 text-[#b9bbb6]">123</span>
      </div>
      <Tool label="Share Screen" green width="ml-[13px] w-[108px]">
        <span className="flex h-6 w-[30px] items-center justify-center rounded-[4px] bg-[#23d959]">
          <svg viewBox="0 0 10 13" className="h-[13px] w-[10px]" fill="none" stroke="#0a1500" strokeWidth="1.900"><path d="M5 13V1.500M1 5.500l4-4 4 4" /></svg>
        </span>
      </Tool>
      <Tool label="Chat" width="ml-[7px] w-[100px]">
        <svg viewBox="0 0 26 24" className="h-6 w-[26px]" fill="#a3a5a0"><path d="M4.500 0.500h17a4 4 0 0 1 4 4v10a4 4 0 0 1-4 4H11L5.500 23.500v-5h-1a4 4 0 0 1-4-4v-10a4 4 0 0 1 4-4z" /></svg>
      </Tool>
      <Tool label="Reactions" width="w-[100px]">
        <svg viewBox="0 0 27 27" className="mb-[3px] ml-[2px] h-[27px] w-[27px]">
          <circle cx="12.200" cy="15" r="11.500" fill="#a3a5a0" />
          <circle cx="21.500" cy="5.500" r="5.500" fill="#081200" />
          <circle cx="8.500" cy="12" r="1.600" fill="#0a1500" />
          <circle cx="16" cy="12" r="1.600" fill="#0a1500" />
          <path d="M7 16.500c1 5 9.500 5 10.500 0" stroke="#0a1500" strokeWidth="1.800" fill="none" />
          <path d="M22 1v8M18 5h8" stroke="#a3a5a0" strokeWidth="1.600" />
        </svg>
      </Tool>
      <Tool label="Settings" width="w-[100px]">
        <svg viewBox="0 0 24 24" className="h-6 w-6" fill="#a3a5a0" stroke="#a3a5a0" strokeLinejoin="round">
          <path fillRule="evenodd" d="M9.500 0.500h5l1 3 2 1.200L21 3.900l2.200 4L21 10.500v3l2.200 2.600-2.200 4-3.500-.8-2 1.200-1 3h-5l-1-3-2-1.200-3.500.8-2.200-4L3 13.500v-3L.8 7.900l2.200-4 3.500.8 2-1.200zM12 7.200a4.800 4.800 0 1 0 0 9.600 4.800 4.800 0 0 0 0-9.600z" />
        </svg>
      </Tool>
      <Tool label="More" width="w-[100px]">
        <span className="flex gap-[5px]">
          {[0, 1, 2].map((i) => (
            <span key={i} className="size-[5px] rounded-full bg-[#a3a5a0]" />
          ))}
        </span>
      </Tool>
      <div className="mt-[15px] ml-[227px] flex h-[35px] w-[87px] items-center justify-center rounded-[10px] bg-[#e02828] pb-px text-[16px] font-bold text-white">Leave</div>
    </div>
  );
}

/* ---------- chat ---------- */

const Head = ({ from, me, className }: { from: string; me?: boolean; className: string }) => (
  <div className={`ml-[68px] text-[15px] leading-[20px] whitespace-nowrap ${className}`}>
    <span className={me ? 'text-[#a9a9ad]' : 'text-[#3aa5f8]'}>{from}</span>
    <span className="mr-[6px] ml-[6.5px] text-[#a9a9ad]">To</span>
    <span className="tracking-[-0.05px] text-[#3aa5f8]">Everyone</span>
  </div>
);

const Avatar = ({ t, c }: { t: string; c: string }) => (
  <div className={`flex size-10 shrink-0 items-center justify-center rounded-[8px] text-[20px] text-white ${c}`}>{t}</div>
);

const Bubble = ({ children, c = 'bg-[#efeef4]' }: { children: React.ReactNode; c?: string }) => (
  <div className={`h-[43px] rounded-[13px] px-3 pt-[9.500px] text-[16px] leading-[23px] tracking-[0.1px] whitespace-nowrap text-[#6e6e73] ${c}`}>{children}</div>
);

const selected = [
  { t: 'The exam validates a candidate’s ability to', w: 'w-[325px]' },
  { t: 'complete the following tasks:', w: 'w-[224px]' },
  { t: '- Explain the value of the AWS Cloud', w: 'w-[277px]', gap: true },
  { t: '- Understand and explain the AWS shared', w: 'w-[323px]' },
  { t: 'responsibility model', w: 'w-[158px]' },
  { t: '- Understand security best practices', w: 'w-[276px]' },
  { t: '-\u00a0 Understand AWS Cloud costs, economics, and', w: 'w-[368px]', gap: true },
  { t: 'billing practices', w: 'w-[121px]' },
  { t: '- Describe and position the core AWS services,', w: 'w-[355px]' },
  { t: 'including compute, network, databases, and', w: 'w-[338px]' },
  { t: 'storage', w: 'w-[61px]' },
  { t: '- Identify AWS services for common use cases', w: 'w-[344px]', gap: true },
];

function Chat() {
  return (
    <div className="flex h-[941px] w-[500px] flex-col bg-white">
      <div className="flex h-[43px] items-center">
        <svg viewBox="0 0 12 8" className="mb-[2px] ml-[15px] h-[7px] w-[11px]" fill="none" stroke="#666" strokeWidth="2"><path d="M1 1.200l5 4.600 5-4.600" /></svg>
        <span className="mt-[3px] ml-[214px] text-[17.600px] font-bold text-[#666]">Chat</span>
      </div>
      <div className="-ml-[3px] flex h-[740px] w-[503px] border-y-2 border-l-2 border-[#2d8cff] bg-white">
        <div className="w-px bg-[#111]" />
        <div className="flex h-[735px] w-[485px] flex-col overflow-hidden">
          <div className="mt-px ml-[18px] flex gap-[10px]">
            <div className="h-[8px] w-10 rounded-b-[8px] bg-[#16a085]" />
            <div className="h-[11px] w-[90px] rounded-b-[13px] bg-[#efeef4]" />
          </div>
          <Head from="Me" me className="mt-[18px]" />
          <div className="mt-[7px] ml-[18px] flex gap-[10px]">
            <Avatar t="AA" c="bg-[#c0392b]" />
            <Bubble c="bg-[#e5effd]">4628118</Bubble>
          </div>
          <Head from="217196 Srinivasa Rao Seshapu" className="mt-[18px]" />
          <div className="mt-[6px] ml-[18px] flex gap-[10px]">
            <Avatar t="2S" c="bg-[#f39c12]" />
            <Bubble>4628118</Bubble>
          </div>
          <Head from="Creighton" className="mt-[18px]" />
          <div className="mt-[7px] ml-[18px] flex gap-[10px]">
            <Avatar t="C" c="bg-[#8e44ad]" />
            <div className="h-[368px] w-[395px] rounded-[13px] bg-[#efeef4] px-3 pt-[10px] text-[16px] leading-[23px] tracking-[0.1px] whitespace-nowrap text-[#6e6e73]">
              <div>Hi Rakesh, migration is considered out of scope</div>
              <div className="mb-[23px]">for the exam</div>
              {selected.map((l) => (
                <div key={l.t} className={`h-[23px] bg-[#2d8cff] leading-[22px] text-white ${l.w} ${l.gap ? 'mt-px' : ''}`}>{l.t}</div>
              ))}
            </div>
          </div>
          <Head from="khirod-173387" className="mt-[18px]" />
          <div className="mt-[6px] ml-[18px] flex gap-[10px]">
            <Avatar t="K" c="bg-[#8e44ad]" />
            <Bubble>number pls</Bubble>
          </div>
          <div className="mt-2 ml-[68px] flex">
            <Bubble>to join the kahoot</Bubble>
          </div>
        </div>
        <div className="mt-[398px] h-[330px] w-[15px] rounded-full bg-[#808080]" />
      </div>
      <div className="flex h-[27px] items-center bg-[#f7f7fb]">
        <svg viewBox="0 0 17 17" className="mb-[3px] ml-[88px] h-[17px] w-[17px]" fill="none" stroke="#777" strokeWidth="1.400">
          <circle cx="7" cy="3.700" r="3" />
          <path d="M7 14.500H1.500c-1.500-3 1.500-5.500 5.500-5" />
          <path d="M12.300 7.500l4 1.800v3.500c0 2-2 3.500-4 4-2-.5-4-2-4-4V9.300z" fill="#0e71eb" stroke="none" />
        </svg>
        <span className="mb-[2px] ml-[5px] text-[15px] whitespace-nowrap text-[#8b8b95]">Who can see your messages? Recording On</span>
      </div>
      <div className="flex h-[26px] items-center pl-[12px] text-[15px]">
        <span className="mb-px w-[27px] tracking-[-0.4px] text-[#666]">To:</span>
        <span className="-mt-px flex h-[27px] w-[102px] items-center justify-center rounded-full bg-[#2d8cff] text-white">Everyone</span>
      </div>
      <div className="pl-[12.500px] text-[16px] leading-[22px] tracking-[0.070px] text-[#747487]">Type message here ...</div>
    </div>
  );
}

/* ---------- taskbar ---------- */

function Taskbar() {
  return (
    <div className="flex h-[50px] items-center bg-linear-to-r from-[#1a1d27] via-[#182534] to-[#1a222d] text-white">
      <svg viewBox="0 0 20 20" className="ml-5 size-5" fill="#fff"><path d="M0 3l8.300-1.200v7.700H0zM9.300 1.600L20 0v9.500H9.300zM0 10.500h8.300v7.700L0 17zM9.300 10.500H20V20L9.300 18.400z" /></svg>
      <div className="ml-5 flex h-[50px] w-[430px] items-center border border-[#bcbcbc] bg-[#f2f2f2] text-[#2b2b2b]">
        <svg viewBox="0 0 21 21" className="mb-px ml-[14px] size-[21px]" fill="none" stroke="#222" strokeWidth="1.500"><circle cx="13" cy="8" r="7" /><path d="M8 13L0.800 20.200" /></svg>
        <span className="ml-[14px] text-[18px] tracking-[-0.08px]">Type here to search</span>
      </div>
      <svg viewBox="0 0 21 20" className="ml-5 h-5 w-[21px]" fill="none" stroke="#fff" strokeWidth="1.300"><path d="M0.700 0v3.500h12V0M0.700 20v-3.500h12V20M0.700 6.200h12v7.600h-12zM18.500 0v4.500M18.500 10v10" /><path d="M17 5.500h3v3.200h-3z" fill="#fff" stroke="none" /></svg>
      <div className="ml-[23px] flex h-[50px] w-[61px] justify-between border-b-[3px] border-[#76b9ed] bg-[#3b4048]">
        <div className="flex w-14 items-center justify-center bg-[#4b5159]">
          <svg viewBox="0 0 30 30" className="mt-[3px] ml-[4px] size-[30px]">
            <defs>
              <linearGradient id="edgeTop" x1="0" y1="0" x2="1" y2="0.300"><stop offset="0" stopColor="#2fa8e8" /><stop offset="0.550" stopColor="#35c6d8" /><stop offset="1" stopColor="#62dc5e" /></linearGradient>
              <linearGradient id="edgeLow" x1="0" y1="0" x2="0.500" y2="1"><stop offset="0" stopColor="#1b9de2" /><stop offset="1" stopColor="#0c5fb5" /></linearGradient>
            </defs>
            <path d="M0.500 12C2 5 8 0 15.500 0 24 0 30 6 30 12.500c0 5-3.500 7.500-7.500 7.500-3 0-5-1-5-2.500 0-1 1-1.500 1-3.500 0-3-3-5-7-5-5 0-9 1-11 3z" fill="url(#edgeTop)" />
            <path d="M0.300 12C2 9.500 6 7.500 10.500 7.500c5 0 8 2.500 8 6-6-2-9 6-4 10.500 4 3 9 1.500 12.500-1C24.500 27.500 20 30 15 30 6.500 30-1 23 0.300 12z" fill="url(#edgeLow)" />
            <path d="M11 15c-1.500 6 1.500 12 8 13 4-1 7-3 8.500-6-4 2.500-9 2.500-12-1-1.500-2-1.500-5 0-7-2-.5-4-.5-4.500 1z" fill="#15489c" />
          </svg>
        </div>
      </div>
      <svg viewBox="0 0 26 26" className="ml-[18px] size-[26px]"><circle cx="13" cy="13" r="13" fill="#0560f5" /><circle cx="13" cy="11" r="5.800" fill="#fff" /><path d="M10.500 14h5v6.500h-5z" fill="#fff" /><ellipse cx="13" cy="11.500" rx="1.500" ry="2.500" fill="#0560f5" /></svg>
      <Outlook className="ml-[34px] size-[29px]" />
      <svg viewBox="0 0 30 28" className="ml-[33px] h-[29px] w-[30px]">
        <circle cx="16" cy="4.500" r="4.500" fill="#7b83eb" /><circle cx="25.500" cy="6.500" r="3.300" fill="#5059c9" />
        <path d="M19 11h10a1 1 0 0 1 1 1v7.500a5.500 5.500 0 0 1-9 3.500z" fill="#5059c9" />
        <path d="M8 11h14.500a1 1 0 0 1 1 1v8.500A7.500 7.500 0 0 1 16 28a7.500 7.500 0 0 1-8-7z" fill="#7b83eb" />
        <rect y="6" width="15.500" height="15.500" rx="1.500" fill="#4b53bc" /><path d="M4 10.200h7.500M7.750 10v8" stroke="#fff" strokeWidth="2" />
      </svg>
      <svg viewBox="0 0 29 25" className="ml-8 h-[25px] w-[29px]">
        <path d="M0 1.500A1.500 1.500 0 0 1 1.500 0H10l3 3H27.500A1.500 1.500 0 0 1 29 4.500V8H0z" fill="#e8a614" />
        <path d="M0 5.500h11.500l2.500-2.500H29V24H0z" fill="#ffd566" />
        <path d="M5 25v-9.500a2.500 2.500 0 0 1 2.500-2.500h14a2.500 2.500 0 0 1 2.500 2.500V25h-5.500v-6h-8v6z" fill="#3f93d8" />
      </svg>
      <svg viewBox="0 0 28 28" className="ml-[34px] size-7">
        <circle cx="14" cy="14" r="14" fill="#fbc116" />
        <path d="M1.900 7A14 14 0 0 1 26.100 7H14a7 7 0 0 0-6.100 3.500z" fill="#e33b2e" />
        <path d="M1.900 7A14 14 0 0 0 14 28l6.100-10.500A7 7 0 0 1 7.900 17.500z" fill="#1ea04b" />
        <path d="M1.900 7l6 10.500" stroke="#1ea04b" />
        <circle cx="14" cy="14" r="6.500" fill="#fff" /><circle cx="14" cy="14" r="5.200" fill="#3a7df0" />
      </svg>
      <div className="ml-[22px] flex h-[50px] w-[51px] items-center justify-center border-b-[3px] border-[#76b9ed]">
        <svg viewBox="0 0 32 28" className="mt-[3px] h-7 w-8"><circle cx="16" cy="16" r="11.500" fill="none" stroke="#0f6b4c" strokeWidth="2.200" /><path d="M5 1h6l16 26h-6z" fill="#000" /><path d="M27 1L5 26" stroke="#000" strokeWidth="1.800" /></svg>
      </div>
      <div className="ml-[11px] flex h-[50px] w-[51px] items-center justify-center border-b-[3px] border-[#76b9ed]">
        <ZoomLogo className="mt-[2px] size-[29px]" />
      </div>
      <div className="ml-[11px] flex h-[50px] w-[51px] items-center justify-center border-b-[3px] border-[#76b9ed]">
        <svg viewBox="0 0 28 28" className="mt-[2px] mr-[3px] size-7">
          <defs><linearGradient id="note" x1="0" y1="0" x2="0.300" y2="1"><stop offset="0" stopColor="#cfeef2" /><stop offset="1" stopColor="#5fb0c2" /></linearGradient></defs>
          <path d="M22 3l5 21-3 1z" fill="#b98a4a" /><path d="M9 1l14 1 2 23-5 3z" fill="#eef4f5" /><path d="M9 1h13l-4 24L1 22z" fill="url(#note)" />
          <path d="M9 2h13" stroke="#555" strokeWidth="1.500" strokeDasharray="1.500 1" />
        </svg>
      </div>
      <div className="ml-auto flex h-[50px] items-center">
        <svg viewBox="0 0 30 20" className="h-5 w-[30px]" fill="none" stroke="#fff" strokeWidth="2"><path d="M25.500 18.500V1H1v15.500a2 2 0 0 0 2 2h24a2 2 0 0 0 2-2V4.500h-3" /><path d="M5 8h7v7H5z" /><path d="M4 4.700h18.500M15 8h7.500M15 11.300h7.500M15 14.700h7.500" strokeWidth="1.500" /></svg>
        <svg viewBox="0 0 16 9" className="ml-[27px] h-[9px] w-4" fill="none" stroke="#fff" strokeWidth="1.400"><path d="M0.700 8.300L8 1l7.300 7.300" /></svg>
        <svg viewBox="0 0 21 14" className="mb-[3px] ml-[22px] h-[14px] w-[21px]" fill="none" stroke="#fff" strokeWidth="1.200"><path d="M1.500 0v2.500M4.500 0v2.500M0.500 2.500h5V5a2.500 2.500 0 0 1-5 0zM3 7.500V13h15.500V3H7.500M19 6h1v4h-1" /><path d="M7.500 5h9.300v6H5V8.500c1.500-.5 2.500-1.500 2.500-3.500z" fill="#fff" stroke="none" /></svg>
        <svg viewBox="0 0 16 16" className="ml-[22px] size-4" fill="none" stroke="#fff" strokeWidth="1.200"><path d="M0.600 16A15.400 15.400 0 0 1 16 0.600M4.500 16A11.500 11.500 0 0 1 16 4.500M8.300 16A7.700 7.700 0 0 1 16 8.300" opacity="0.850" /><circle cx="13.800" cy="14" r="1.600" fill="#fff" /></svg>
        <svg viewBox="0 0 22 18" className="ml-[20px] h-[18px] w-[22px]" fill="none" stroke="#fff" strokeWidth="1.200"><path d="M0.700 6h3l4-4v14l-4-4h-3zM11 6.500a3.500 3.500 0 0 1 0 5M14 4a7 7 0 0 1 0 10M17 1.500a10.500 10.500 0 0 1 0 15" /></svg>
        <span className="ml-[17px] w-[30px] text-[15px] tracking-[-0.8px]">ENG</span>
        <div className="ml-[18px] flex w-[62px] flex-col items-center text-[14.500px] leading-[23px] tracking-[-0.350px]">
          <span>8:56 PM</span>
          <span>1/7/2022</span>
        </div>
        <div className="relative ml-[27px] h-[50px] w-8">
          <svg viewBox="0 0 20 20" className="absolute top-[14px] left-0 size-5"><path d="M0 0h20v17H9l-4 3v-3H0z" fill="#fff" /><path d="M4 5h12M4 8.500h12M4 12h9" stroke="#1a222d" strokeWidth="1.200" /></svg>
          <span className="absolute top-[23px] left-[7px] flex size-[24px] items-center justify-center rounded-full border border-[#9a9a9a] bg-[#33383f] text-[14px] font-bold">27</span>
        </div>
        <span className="ml-[12px] h-[50px] w-px bg-[#7b8088]" />
        <span className="w-[5px]" />
      </div>
    </div>
  );
}

export default function App() {
  return (
    <div className="flex h-[1080px] w-[1920px] flex-col overflow-hidden bg-[#111] font-['Open_Sans','Noto_Sans',sans-serif]">
      <TabStrip />
      <AddressRow />
      <div className="flex">
        <div className="flex h-[941px] w-[1420px] shrink-0 flex-col">
          <Gallery />
          <ShareFrame />
          <MeetingToolbar />
        </div>
        <Chat />
      </div>
      <Taskbar />
    </div>
  );
}
